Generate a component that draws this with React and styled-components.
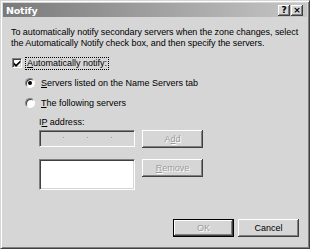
import React from "react";
import styled, { createGlobalStyle } from "styled-components";

const GlobalStyle = createGlobalStyle`
  html, body {
    margin: 0;
    padding: 0;
    background: #d6d6d6;
  }
  body {
    font-family: "Liberation Sans", Arial, sans-serif;
    font-size: 9px;
    color: #000;
  }
`

const Window = styled.div`
  box-sizing: border-box;
  width: 310px;
  height: 249px;
  background: #d6d6d6;
  border: 1px solid;
  border-color: #d6d6d6 #404040 #404040 #d6d6d6;
  box-shadow: inset 1px 1px #fff, inset -1px -1px #808080;
  padding: 2px;
  display: flex;
  flex-direction: column;
  overflow: hidden;
`

const TitleBar = styled.div`
  height: 14px;
  display: flex;
  align-items: center;
  justify-content: space-between;
  padding: 0 4px 0 3px;
  background: linear-gradient(to right, #7a7a7a, #c6c6c6);
  color: #fff;
  font-weight: bold;
  font-size: 9.5px;
  font-family: "DejaVu Sans", Tahoma, sans-serif;
  letter-spacing: -0.2px;
`

const CaptionButtons = styled.div`
  display: flex;
  gap: 1px;
`

const CaptionButton = styled.div`
  box-sizing: border-box;
  width: 12px;
  height: 11px;
  background: #d6d6d6;
  box-shadow: inset -1px -1px #404040, inset 1px 1px #fff, inset -2px -2px #808080;
  color: #000;
  font-size: 9px;
  font-weight: bold;
  line-height: 11px;
  text-align: center;
`

const Body = styled.div`
  flex: 1;
  display: flex;
  flex-direction: column;
  padding: 10px 8px 9px 8px;
`

const Intro = styled.p`
  margin: 0;
  line-height: 11px;
  white-space: nowrap;
  letter-spacing: -0.05px;
`

const CheckRow = styled.div`
  display: flex;
  align-items: center;
  margin-top: 8px;
  height: 12px;
  padding-left: 1px;
`

const CheckBox = styled.div`
  box-sizing: border-box;
  width: 10px;
  height: 10px;
  background: #fff;
  border: 1px solid;
  border-color: #808080 #fff #fff #808080;
  box-shadow: inset 1px 1px #404040, inset -1px -1px #d6d6d6;
  display: flex;
  align-items: center;
  justify-content: center;
  margin-right: 4px;
`

const FocusLabel = styled.span`
  outline: 1px dotted #000;
  padding: 0 1px;
  line-height: 11px;
`

const RadioRow = styled.div`
  display: flex;
  align-items: center;
  height: 12px;
  margin-top: ${p => p.$gap}px;
  padding-left: 14px;
`

const Radio = styled.div`
  box-sizing: border-box;
  width: 10px;
  height: 10px;
  border-radius: 50%;
  background: #fff;
  border: 1px solid;
  border-color: #808080 #fff #fff #808080;
  box-shadow: inset 1px 1px #404040;
  display: flex;
  align-items: center;
  justify-content: center;
  margin-right: 6px;

  &::after {
    content: "";
    display: ${p => (p.$checked ? "block" : "none")};
    width: 4px;
    height: 4px;
    border-radius: 50%;
    background: #000;
  }
`

const Group = styled.div`
  padding-left: 28px;
  margin-top: 7px;
`

const FieldLabel = styled.div`
  line-height: 12px;
  margin-bottom: 2px;
`

const FieldGrid = styled.div`
  display: grid;
  grid-template-columns: 96px 61px;
  column-gap: 7px;
  row-gap: 11px;
  align-items: start;
`

const Sunken = styled.div`
  box-sizing: border-box;
  position: relative;
  height: ${p => p.$h}px;
  background: ${p => (p.$disabled ? "#d6d6d6" : "#fff")};
  border: 1px solid;
  border-color: #808080 #fff #fff #808080;
  box-shadow: inset 1px 1px #404040, inset -1px -1px #d6d6d6;
`

const Dot = styled.span`
  position: absolute;
  top: 6px;
  width: 1px;
  height: 1px;
  background: #9a9a9a;
`

const Button = styled.div`
  box-sizing: border-box;
  width: 61px;
  height: 18px;
  display: flex;
  align-items: center;
  justify-content: center;
  background: #d6d6d6;
  border: ${p => (p.$default ? "1px solid #000" : "none")};
  box-shadow: inset -1px -1px #404040, inset 1px 1px #fff, inset -2px -2px #808080;
  color: ${p => (p.$disabled ? "#9a9a9a" : "#000")};
  text-shadow: ${p => (p.$disabled ? "1px 1px #fff" : "none")};
  font-size: 9px;
`

const Footer = styled.div`
  margin-top: auto;
  display: flex;
  justify-content: flex-end;
  gap: 4px;
`

const U = styled.span`
  text-decoration: underline;
`

function CheckMark() {
  return (
    <svg width="7" height="7" viewBox="0 0 7 7">
      <path d="M0 2.6 L2 4.6 L6.5 0.3 L6.5 2.6 L2 7 L0 5 Z" fill="#000" />
    </svg>
  )
}

export default function App() {
  return (
    <>
      <GlobalStyle />
      <Window>
        <TitleBar>
          <span>Notify</span>
          <CaptionButtons>
            <CaptionButton>?</CaptionButton>
            <CaptionButton>×</CaptionButton>
          </CaptionButtons>
        </TitleBar>
        <Body>
          <Intro>
            To automatically notify secondary servers when the zone changes, select
            <br />
            the Automatically Notify check box, and then specify the servers.
          </Intro>
          <CheckRow>
            <CheckBox><CheckMark /></CheckBox>
            <FocusLabel><U>A</U>utomatically notify:</FocusLabel>
          </CheckRow>
          <RadioRow $gap={8}>
            <Radio $checked />
            <span><U>S</U>ervers listed on the Name Servers tab</span>
          </RadioRow>
          <RadioRow $gap={8}>
            <Radio />
            <span><U>T</U>he following servers</span>
          </RadioRow>
          <Group>
            <FieldLabel>I<U>P</U> address:</FieldLabel>
            <FieldGrid>
              <Sunken $h={17} $disabled>
                <Dot style={{ left: 23 }} />
                <Dot style={{ left: 47 }} />
                <Dot style={{ left: 71 }} />
              </Sunken>
              <Button $disabled>A<U>d</U>d</Button>
              <Sunken $h={31} />
              <Button $disabled><U>R</U>emove</Button>
            </FieldGrid>
          </Group>
          <Footer>
            <Button $default $disabled>OK</Button>
            <Button>Cancel</Button>
          </Footer>
        </Body>
      </Window>
    </>
  )
}
